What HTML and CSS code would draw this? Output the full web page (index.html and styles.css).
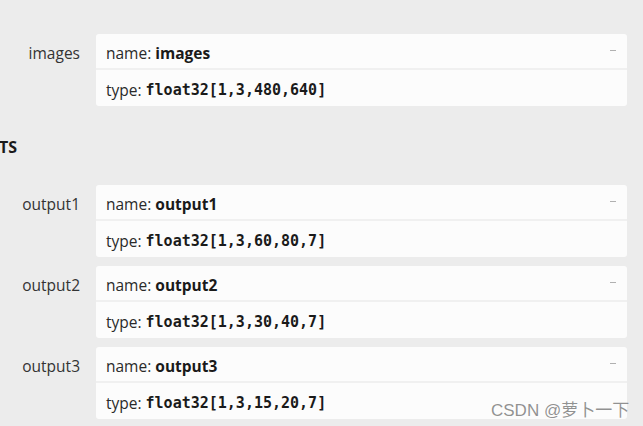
FILE: index.html
```html
<!DOCTYPE html>
<html>
<head>
<meta charset="utf-8">
<link rel="stylesheet" href="styles.css">
</head>
<body>
<div class="page">
  <div class="list first">
    <div class="row">
      <div class="label">images</div>
      <div class="card">
        <div class="line head"><span>name: <b>images</b></span><span class="toggle"></span></div>
        <div class="line">type: <code>float32[1,3,480,640]</code></div>
      </div>
    </div>
  </div>
  <div class="heading">TS</div>
  <div class="list">
    <div class="row">
      <div class="label">output1</div>
      <div class="card">
        <div class="line head"><span>name: <b>output1</b></span><span class="toggle"></span></div>
        <div class="line">type: <code>float32[1,3,60,80,7]</code></div>
      </div>
    </div>
    <div class="row">
      <div class="label">output2</div>
      <div class="card">
        <div class="line head"><span>name: <b>output2</b></span><span class="toggle"></span></div>
        <div class="line">type: <code>float32[1,3,30,40,7]</code></div>
      </div>
    </div>
    <div class="row">
      <div class="label">output3</div>
      <div class="card">
        <div class="line head"><span>name: <b>output3</b></span><span class="toggle"></span></div>
        <div class="line">type: <code>float32[1,3,15,20,7]</code></div>
      </div>
    </div>
  </div>
  <div class="watermark">CSDN @萝卜一下</div>
</div>
</body>
</html>
```

FILE: styles.css
```css
html, body {
  margin: 0;
  padding: 0;
  background: #ececec;
}
.page {
  position: relative;
  width: 643px;
  height: 426px;
  overflow: hidden;
  font-family: "Open Sans", "Noto Sans", sans-serif;
  font-size: 15.5px;
  color: #2a2a2a;
}
.list {
  display: flex;
  flex-direction: column;
  gap: 9px;
  padding-right: 16px;
}
.list.first {
  padding-top: 34px;
}
.row {
  display: flex;
  gap: 16px;
}
.label {
  width: 80px;
  flex: none;
  text-align: right;
  padding-top: 8px;
  color: #333;
}
.card {
  flex: 1;
  background: #fcfcfc;
  border-radius: 3px;
}
.line {
  height: 36px;
  padding: 3px 10px 0;
  box-sizing: border-box;
  display: flex;
  align-items: center;
}
.line.head {
  justify-content: space-between;
  border-bottom: 2px solid #f0f0f0;
}
.line b {
  font-weight: 700;
  color: #1a1a1a;
}
.line code {
  font-family: "DejaVu Sans Mono", monospace;
  font-weight: 700;
  font-size: 15px;
  color: #1a1a1a;
  margin-left: 4px;
}
.toggle {
  width: 6px;
  height: 1px;
  background: #b0b0b0;
  margin-right: 1px;
  margin-bottom: 4px;
}
.heading {
  font-weight: 700;
  font-size: 16px;
  color: #1a1a1a;
  height: 79px;
  line-height: 22px;
  padding-top: 30px;
  box-sizing: border-box;
  margin-left: -1px;
}
.watermark {
  position: absolute;
  left: 491px;
  top: 396px;
  font-family: "Liberation Sans", "Noto Sans CJK SC", sans-serif;
  font-size: 17px;
  color: rgba(110, 110, 110, 0.75);
}
```
